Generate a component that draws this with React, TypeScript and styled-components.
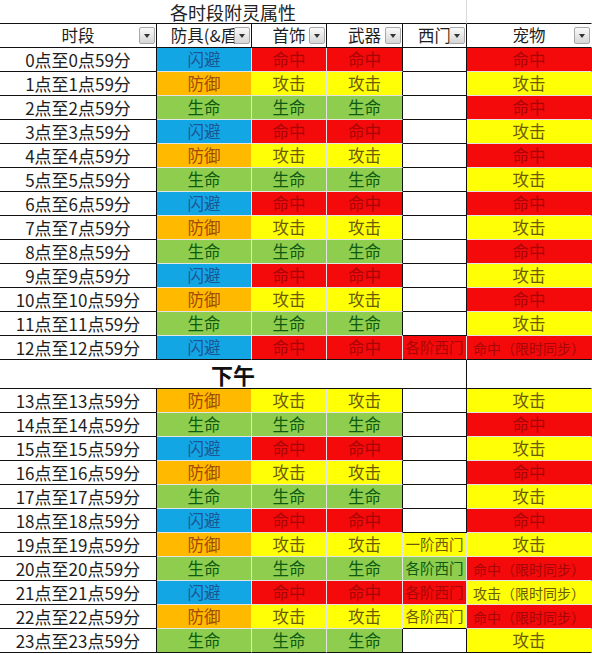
import { FC } from 'react';
import styled, { createGlobalStyle } from 'styled-components';

const GlobalStyle = createGlobalStyle`
  * { box-sizing: border-box; }
  body {
    margin: 0;
    background: #fff;
    font-family: 'Noto Sans CJK SC', 'Noto Sans', sans-serif;
  }
`;

type Kind = 'dodge' | 'def' | 'life' | 'hit' | 'atk';

const palette: Record<Kind, { bg: string; fg: string }> = {
  dodge: { bg: '#12a7e4', fg: '#1c5596' },
  def: { bg: '#ffba00', fg: '#a04a06' },
  life: { bg: '#8fcd4e', fg: '#0d5a12' },
  hit: { bg: '#f40a0a', fg: '#a80606' },
  atk: { bg: '#ffff06', fg: '#6a5c08' },
};

const labels: Record<Kind, string> = {
  dodge: '闪避',
  def: '防御',
  life: '生命',
  hit: '命中',
  atk: '攻击',
};

const BLACK = '#101010';
const SOFT = '#e4e4e4';
const columns = '157px 95px 75px 76px 64px 125px';

const Sheet = styled.div`
  width: 592px;
  display: flex;
  flex-direction: column;
`;

const Row = styled.div<{ $h: number }>`
  display: grid;
  grid-template-columns: ${columns};
  height: ${(p) => p.$h}px;
`;

const Cell = styled.div<{
  $bg?: string;
  $fg?: string;
  $right?: string;
  $bottom?: string;
  $span?: number;
  $size?: number;
}>`
  position: relative;
  grid-column: span ${(p) => p.$span || 1};
  display: flex;
  align-items: center;
  justify-content: center;
  white-space: nowrap;
  background: ${(p) => p.$bg || '#fff'};
  color: ${(p) => p.$fg || '#1e1e1e'};
  border-right: 1px solid ${(p) => p.$right || 'transparent'};
  border-bottom: 1px solid ${(p) => p.$bottom || 'transparent'};
  font-size: ${(p) => p.$size || 16.5}px;
  line-height: 1;
`;

const Title = styled.span`
  font-size: 18px;
  color: #222;
`;

const Noon = styled.span`
  font-size: 22px;
  font-weight: bold;
  color: #111;
`;

const Dropdown = styled.span`
  position: absolute;
  right: 1px;
  top: 3px;
  width: 16px;
  height: 17px;
  border: 1px solid #a8a8a8;
  border-radius: 2px;
  background: linear-gradient(#fafafa, #d6d6d6);
  display: flex;
  align-items: center;
  justify-content: center;
  &::after {
    content: '';
    border-left: 3.5px solid transparent;
    border-right: 3.5px solid transparent;
    border-top: 4px solid #333;
  }
`;

type Slot = { kind?: Kind; text?: string; size?: number };

const buildRow = (h: number): Slot[] => {
  const gear: Kind = (['dodge', 'def', 'life'] as Kind[])[h % 3];
  const wear: Kind = (['hit', 'atk', 'life'] as Kind[])[h % 3];
  const pet: Kind = h % 2 === 0 ? 'hit' : 'atk';
  const ximen: Record<number, string> = {
    12: '各阶西门',
    19: '一阶西门',
    20: '各阶西门',
    21: '各阶西门',
    22: '各阶西门',
  };
  const synced = [12, 20, 21, 22].includes(h);
  return [
    { text: `${h}点至${h}点59分`, size: 17 },
    { kind: gear },
    { kind: wear },
    { kind: wear },
    ximen[h] ? { kind: wear, text: ximen[h], size: 14.5 } : {},
    { kind: pet, text: synced ? `${labels[pet]}（限时同步）` : undefined, size: synced ? 14 : undefined },
  ];
};

const edge = (a?: Slot, b?: Slot) => (a?.kind && b?.kind ? SOFT : BLACK);

const DataRows: FC<{ hours: number[] }> = ({ hours }) => {
  const rows = hours.map(buildRow);
  return (
    <>
      {rows.map((slots, r) => (
        <Row $h={24} key={hours[r]}>
          {slots.map((s, c) => {
            const below = rows[r + 1] ? rows[r + 1][c] : undefined;
            const color = s.kind ? palette[s.kind] : undefined;
            return (
              <Cell
                key={c}
                $bg={color?.bg}
                $fg={color?.fg}
                $size={s.size}
                $right={c < 5 ? edge(s, slots[c + 1]) : undefined}
                $bottom={edge(s, below)}
              >
                {s.text ?? (s.kind ? labels[s.kind] : '')}
              </Cell>
            );
          })}
        </Row>
      ))}
    </>
  );
};

const headers = ['时段', '防具(&盾', '首饰', '武器', '西门', '宠物'];

export default function App() {
  const morning = Array.from({ length: 13 }, (_, i) => i);
  const afternoon = Array.from({ length: 11 }, (_, i) => i + 13);
  return (
    <>
      <GlobalStyle />
      <Sheet>
        <Row $h={24}>
          <Cell $span={5} $right="#d9d9d9" $bottom={BLACK}>
            <Title>各时段附灵属性</Title>
          </Cell>
          <Cell $bottom={BLACK} />
        </Row>
        <Row $h={24}>
          {headers.map((h, i) => (
            <Cell key={h} $right={i < 5 ? BLACK : undefined} $bottom={BLACK}>
              {h}
              <Dropdown />
            </Cell>
          ))}
        </Row>
        <DataRows hours={morning} />
        <Row $h={29}>
          <Cell $span={5} $right={BLACK} $bottom={BLACK}>
            <Noon>下午</Noon>
          </Cell>
          <Cell $bottom={BLACK} />
        </Row>
        <DataRows hours={afternoon} />
      </Sheet>
    </>
  );
}
